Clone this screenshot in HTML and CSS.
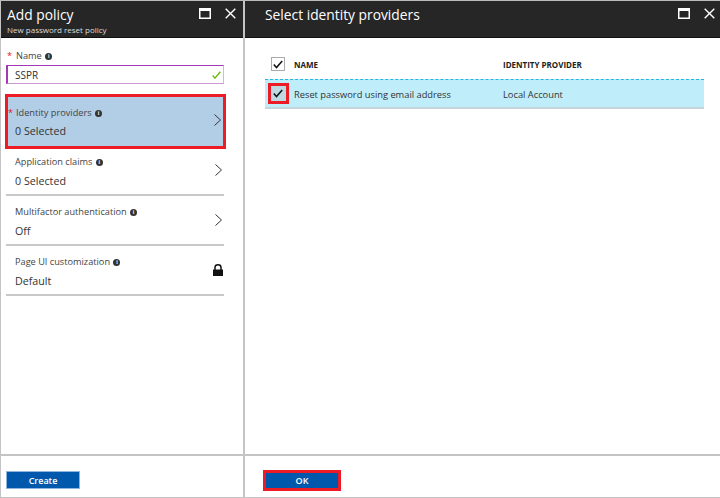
FILE: index.html
```html
<!DOCTYPE html>
<html lang="en">

<head>
    <meta charset="UTF-8">
    <title>Add policy</title>
    <link rel="stylesheet" href="styles.css">
</head>

<body>
    <div class="blades">
        <section class="blade blade-left">
            <header class="blade-head">
                <div>
                    <h1>Add policy</h1>
                    <p class="subtitle">New password reset policy</p>
                </div>
                <div class="head-icons">
                    <svg width="12" height="11" viewBox="0 0 12 11"><path d="M0 0h12v11H0z M1.500 3v6.500h9V3z" fill="#fff" fill-rule="evenodd"/></svg>
                    <svg width="11" height="11" viewBox="0 0 11 11"><path d="M.7.7l9.600 9.600M10.300.7L.7 10.300" stroke="#fff" stroke-width="1.400" fill="none"/></svg>
                </div>
            </header>
            <div class="blade-body">
                <div class="name-field">
                    <div class="field-label"><span class="req">*</span>Name <i class="info">i</i></div>
                    <div class="name-input">
                        <span>SSPR</span>
                        <svg width="9" height="8" viewBox="0 0 10 9"><path d="M.7 5l2.600 3L9.300.8" stroke="#6bb700" stroke-width="1.500" fill="none"/></svg>
                    </div>
                </div>
                <div class="row row-active">
                    <div>
                        <div class="row-label"><span class="req req-active">*</span>Identity providers <i class="info">i</i></div>
                        <div class="row-value">0 Selected</div>
                    </div>
                    <svg class="chevron" width="7" height="12" viewBox="0 0 7 12"><path d="M.5.500l6 5.500-6 5.500" stroke="#333" fill="none"/></svg>
                </div>
                <div class="row">
                    <div>
                        <div class="row-label">Application claims <i class="info">i</i></div>
                        <div class="row-value">0 Selected</div>
                    </div>
                    <svg class="chevron" width="7" height="12" viewBox="0 0 7 12"><path d="M.5.500l6 5.500-6 5.500" stroke="#333" fill="none"/></svg>
                </div>
                <div class="row">
                    <div>
                        <div class="row-label">Multifactor authentication <i class="info">i</i></div>
                        <div class="row-value">Off</div>
                    </div>
                    <svg class="chevron" width="7" height="12" viewBox="0 0 7 12"><path d="M.5.500l6 5.500-6 5.500" stroke="#333" fill="none"/></svg>
                </div>
                <div class="row">
                    <div>
                        <div class="row-label">Page UI customization <i class="info">i</i></div>
                        <div class="row-value">Default</div>
                    </div>
                    <svg class="lock" width="10" height="12" viewBox="0 0 10 12"><path d="M0 5.500h10V12H0z" fill="#111"/><path d="M2 6V3.500a3 2.700 0 0 1 6 0V6" stroke="#111" stroke-width="1.500" fill="none"/></svg>
                </div>
            </div>
            <footer class="blade-foot">
                <button class="btn btn-create">Create</button>
            </footer>
        </section>

        <section class="blade blade-right">
            <header class="blade-head blade-head-right">
                <h2>Select identity providers</h2>
                <div class="head-icons">
                    <svg width="12" height="11" viewBox="0 0 12 11"><path d="M0 0h12v11H0z M1.500 3v6.500h9V3z" fill="#fff" fill-rule="evenodd"/></svg>
                    <svg width="11" height="11" viewBox="0 0 11 11"><path d="M.7.7l9.600 9.600M10.300.7L.7 10.300" stroke="#fff" stroke-width="1.400" fill="none"/></svg>
                </div>
            </header>
            <div class="blade-body blade-body-right">
                <div class="table-head">
                    <span class="check-cell">
                        <span class="check">
                            <svg width="10" height="9" viewBox="0 0 10 9"><path d="M.8 4.500l2.700 3L9.200 1" stroke="#111" stroke-width="1.500" fill="none"/></svg>
                        </span>
                    </span>
                    <span class="col-name">NAME</span>
                    <span class="col-provider">IDENTITY PROVIDER</span>
                </div>
                <div class="table-row">
                    <span class="check-cell">
                        <span class="check check-marked">
                            <svg width="10" height="9" viewBox="0 0 10 9"><path d="M.8 4.500l2.700 3L9.200 1" stroke="#111" stroke-width="1.500" fill="none"/></svg>
                        </span>
                    </span>
                    <span class="col-name cell">Reset password using email address</span>
                    <span class="col-provider cell">Local Account</span>
                </div>
            </div>
            <footer class="blade-foot blade-foot-right">
                <button class="btn btn-ok">OK</button>
            </footer>
        </section>
    </div>
</body>

</html>
```

FILE: styles.css
```css
* {
    box-sizing: border-box;
}

html,
body {
    margin: 0;
    height: 100%;
}

body {
    font-family: "Open Sans", "Noto Sans", sans-serif;
    color: #333;
    background: #fff;
    overflow: hidden;
}

.blades {
    display: flex;
    width: 720px;
    height: 498px;
    border-top: 1px solid #bbb;
    border-bottom: 1px solid #c4c4c4;
}

.blade {
    display: flex;
    flex-direction: column;
    height: 100%;
}

.blade-left {
    width: 245px;
    border-left: 1px solid #c4c4c4;
    border-right: 2px solid #c4c4c4;
}

.blade-right {
    width: 475px;
}

.blade-head {
    display: flex;
    justify-content: space-between;
    height: 37px;
    flex-shrink: 0;
    padding: 4px 6px 0 6px;
    background: #262626;
    color: #fff;
    border-bottom: 1px solid #111;
}

.blade-head-right {
    padding-left: 20px;
    padding-right: 4px;
}

h1,
h2 {
    margin: 0;
    font-weight: 400;
    font-size: 13.800px;
    line-height: 19px;
}

.subtitle {
    margin: 0;
    font-size: 8px;
    line-height: 11px;
    color: #ddd;
}

.head-icons {
    display: flex;
    gap: 14px;
    padding: 3px 1px 0 0;
}

.blade-body {
    flex: 1;
    padding: 11px 19px 0 5px;
    border-bottom: 2px solid #c4c4c4;
}

.name-field {
    height: 45px;
}

.field-label,
.row-label {
    font-size: 9.200px;
    line-height: 13px;
    color: #444;
}

.field-label {
    padding-left: 1px;
}

.req {
    color: #e81123;
    margin-right: 4px;
}

.req-active {
    position: absolute;
    margin-left: -8px;
}

.info {
    display: inline-block;
    width: 7px;
    height: 7px;
    margin-left: 1px;
    border-radius: 50%;
    background: #333;
    color: #fff;
    font-size: 5px;
    line-height: 7px;
    font-style: normal;
    font-weight: 700;
    text-align: center;
    vertical-align: 1px;
}

.name-input {
    display: flex;
    align-items: center;
    justify-content: space-between;
    height: 19px;
    margin-top: 3px;
    padding: 0 2px 0 7px;
    border: 1px solid #a33ab5;
    border-right-color: #c4c4c4;
    border-bottom-color: #c89ad2;
    border-left-width: 2px;
    font-size: 10px;
    color: #333;
}

.row {
    display: flex;
    align-items: center;
    justify-content: space-between;
    height: 50px;
    padding-left: 9px;
    padding-right: 1px;
    border-bottom: 2px solid #c8c8c8;
}

.row-active + .row {
    height: 47px;
}

.row-active + .row ~ .row {
    padding-top: 3px;
}

.row-active {
    height: 55px;
    margin: 0 -2px 0 -1px;
    background: #b2cde6;
    border: 3px solid #ed1c24;
    padding-left: 8px;
    padding-right: 1px;
}

.row-value {
    margin-top: 6px;
    font-size: 10.700px;
    line-height: 14px;
    color: #333;
}

.row-active .row-value {
    margin-top: 5px;
    margin-left: -1px;
}

.chevron,
.lock {
    flex-shrink: 0;
    margin-bottom: 4px;
    margin-right: 1px;
}

.lock {
    margin-right: 0;
}

.blade-foot {
    height: 41px;
    flex-shrink: 0;
    padding: 15px 0 0 5px;
}

.blade-foot-right {
    padding: 14px 0 0 18px;
}

.btn {
    display: block;
    font-family: inherit;
    font-size: 9px;
    font-weight: 600;
    color: #fff;
    background: #0058ad;
    padding: 0;
}

.btn-create {
    width: 74px;
    height: 18px;
    border: 1px solid #8fb4d9;
}

.btn-ok {
    width: 78px;
    height: 21px;
    border: 3px solid #ed1c24;
}

.blade-body-right {
    padding: 15px 16px 0 20px;
}

.table-head,
.table-row {
    display: flex;
    align-items: center;
}

.table-head {
    height: 26px;
    padding-bottom: 4px;
}

.table-row {
    height: 30px;
    background: #bfeefa;
    border-top: 1px dashed #22b5e6;
    border-bottom: 2px solid #c4d6dc;
}

.check-cell {
    display: flex;
    justify-content: center;
    align-items: center;
    width: 26px;
    margin-right: 3px;
    flex-shrink: 0;
}

.check {
    display: flex;
    align-items: center;
    justify-content: center;
    width: 14px;
    height: 14px;
    background: #fff;
    border: 1px solid #aaa;
}

.check-marked {
    flex-shrink: 0;
    width: 21px;
    height: 21px;
    background: #bfd9e2;
    border: 3px solid #ed1c24;
}

.col-name {
    width: 209px;
    font-size: 8px;
    font-weight: 700;
    color: #222;
}

.col-provider {
    font-size: 8px;
    font-weight: 700;
    color: #222;
}

.cell {
    padding-top: 2px;
    font-size: 9.300px;
    font-weight: 400;
    color: #333;
}
```
